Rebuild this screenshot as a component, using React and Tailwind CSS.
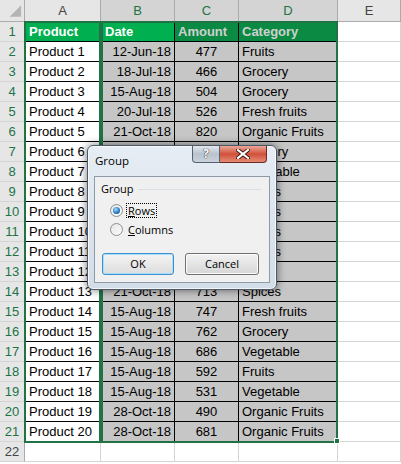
import React from 'react'

const data = [
  ['Product', 'Date', 'Amount', 'Category'],
  ['Product 1', '12-Jun-18', '477', 'Fruits'],
  ['Product 2', '18-Jul-18', '466', 'Grocery'],
  ['Product 3', '15-Aug-18', '504', 'Grocery'],
  ['Product 4', '20-Jul-18', '526', 'Fresh fruits'],
  ['Product 5', '21-Oct-18', '820', 'Organic Fruits'],
  ['Product 6', '21-Oct-18', '790', 'Grocery'],
  ['Product 7', '15-Aug-18', '612', 'Vegetable'],
  ['Product 8', '12-Jun-18', '540', 'Spices'],
  ['Product 9', '18-Jul-18', '475', 'Spices'],
  ['Product 10', '15-Aug-18', '699', 'Spices'],
  ['Product 11', '20-Jul-18', '583', 'Spices'],
  ['Product 12', '21-Oct-18', '606', 'Fruits'],
  ['Product 13', '21-Oct-18', '713', 'Spices'],
  ['Product 14', '15-Aug-18', '747', 'Fresh fruits'],
  ['Product 15', '15-Aug-18', '762', 'Grocery'],
  ['Product 16', '15-Aug-18', '686', 'Vegetable'],
  ['Product 17', '15-Aug-18', '592', 'Fruits'],
  ['Product 18', '15-Aug-18', '531', 'Vegetable'],
  ['Product 19', '28-Oct-18', '490', 'Organic Fruits'],
  ['Product 20', '28-Oct-18', '681', 'Organic Fruits'],
]

function cellClass(r, c) {
  const inData = r <= 21
  if (!inData || c === 4) return 'bg-white border-r border-b border-[#d4d4d4]'
  const base = 'border-r border-b border-black whitespace-nowrap overflow-hidden'
  if (r === 1) {
    if (c === 0) return base + ' bg-[#00b050] text-white font-bold pl-[4px]'
    if (c === 1) return base + ' bg-[#00b050] text-white font-bold pl-[4px]'
    return base + ' bg-[#0a8a42] text-[#d0d0d0] font-bold pl-[3px]'
  }
  if (c === 0) return base + ' bg-white pl-[4px]'
  if (c === 1) return base + ' bg-[#c6c6c6] justify-end pr-[3px]'
  if (c === 2) return base + ' bg-[#c6c6c6] justify-center'
  return base + ' bg-[#c6c6c6] pl-[3px]'
}

function Radio({ checked }) {
  return (
    <div className="w-[13px] h-[13px] rounded-full border border-[#8e8f8f] bg-gradient-to-br from-[#e6e6e6] to-[#fbfbfb] flex items-center justify-center">
      {checked && (
        <div className="w-[7px] h-[7px] rounded-full bg-[radial-gradient(circle_at_40%_35%,#a8dcff,#1f74c0_60%,#0d4a86)]" />
      )}
    </div>
  )
}

function GroupDialog() {
  return (
    <div className="absolute left-[87px] top-[145px] w-[190px] h-[145px] rounded-[6px] border border-[#4d5968] bg-gradient-to-b from-[#e6edf4] to-[#d3dde8] shadow-[0_0_9px_rgba(0,0,0,0.55),inset_0_0_0_1px_rgba(255,255,255,0.7)] flex flex-col font-['Open_Sans',sans-serif] text-[11px] text-black">
      {/* title bar */}
      <div className="h-[30px] flex justify-between items-start">
        <div className="pl-[7px] pt-[6px] text-[11.5px]">Group</div>
        <div className="flex mr-[9px]">
          <div className="w-[28px] h-[17px] rounded-bl-[4px] border border-t-0 border-[#56626f] bg-gradient-to-b from-[#e2e8ee] via-[#b9c3cd] to-[#cad3dc] flex items-center justify-center text-white font-bold text-[12px] leading-none [text-shadow:0_0_1px_#222,0_0_1px_#222]">
            ?
          </div>
          <div className="w-[47px] h-[17px] rounded-br-[4px] border border-t-0 border-l-0 border-[#6b2a22] bg-gradient-to-b from-[#eaa797] via-[#d04f3a] to-[#e38a73] flex items-center justify-center">
            <svg width="14" height="10" viewBox="0 0 14 10">
              <path d="M2 1 L12 9 M12 1 L2 9" stroke="#3a1410" strokeWidth="4" strokeLinecap="square" />
              <path d="M2 1 L12 9 M12 1 L2 9" stroke="#ffffff" strokeWidth="2.2" strokeLinecap="square" />
            </svg>
          </div>
        </div>
      </div>

      {/* client area */}
      <div className="ml-[6px] w-[176px] h-[107px] border border-[#8d9aa8] bg-[#f0f0f0] flex flex-col">
        <div className="mt-[5px] h-[15px] flex items-center pl-[6px] pr-[8px] gap-[4px]">
          <span>Group</span>
          <div className="flex-1 h-px bg-[#d5dfe5]" />
        </div>
        <div className="mt-[4px] pl-[15px] flex flex-col">
          <div className="h-[19px] flex items-center gap-[3px]">
            <Radio checked />
            <span className="border border-dotted border-black px-[1px] leading-[13px]">
              <span className="underline">R</span>ows
            </span>
          </div>
          <div className="h-[19px] flex items-center gap-[3px]">
            <Radio />
            <span className="border border-transparent px-[1px] leading-[13px]">
              <span className="underline">C</span>olumns
            </span>
          </div>
        </div>
        <div className="mt-[14px] pl-[7px] flex gap-[11px]">
          <div className="w-[72px] h-[22px] rounded-[3px] border border-[#3c8fd0] shadow-[inset_0_0_0_1px_#a9defa] bg-gradient-to-b from-[#f4f4f4] to-[#dddddd] flex items-center justify-center">
            OK
          </div>
          <div className="w-[74px] h-[22px] rounded-[3px] border border-[#707070] shadow-[inset_0_0_0_1px_#fcfcfc] bg-gradient-to-b from-[#f2f2f2] to-[#d6d6d6] flex items-center justify-center">
            Cancel
          </div>
        </div>
      </div>
    </div>
  )
}

export default function App() {
  const rows = Array.from({ length: 22 }, (_, i) => i + 1)
  const cols = ['A', 'B', 'C', 'D', 'E']

  return (
    <div className="relative w-[401px] h-[464px] overflow-hidden bg-white font-['Liberation_Sans',Arial,sans-serif] text-[13px] text-black">
      <div className="grid grid-cols-[25px_76px_74px_64px_99px_1fr]">
        {/* column headers */}
        <div className="h-[22px] bg-[#e6e6e6] border-r border-b border-[#ababab] flex items-end justify-end">
          <svg width="25" height="22" viewBox="0 0 25 22">
            <polygon points="22,6 22,18 10,18" fill="#b4b4b4" />
          </svg>
        </div>
        {cols.map((c, i) => (
          <div
            key={c}
            className={
              i >= 1 && i <= 3
                ? 'h-[22px] bg-[#d4d4d4] border-r border-b border-[#ababab] text-[#217346] flex items-center justify-center'
                : 'h-[22px] bg-[#e6e6e6] border-r border-b border-[#ababab] text-[#444] flex items-center justify-center'
            }
          >
            {c}
          </div>
        ))}

        {/* body rows */}
        {rows.map(r => (
          <React.Fragment key={r}>
            <div
              className={
                r <= 21
                  ? 'h-5 bg-[#e6e6e6] border-b border-[#d4d4d4] border-r border-r-[#ababab] text-[#217346] flex items-center justify-center'
                  : 'h-5 bg-[#e6e6e6] border-b border-[#d4d4d4] border-r border-r-[#ababab] text-[#444] flex items-center justify-center'
              }
            >
              {r}
            </div>
            {[0, 1, 2, 3, 4].map(c => (
              <div key={c} className={'h-5 flex items-center pt-px ' + cellClass(r, c)}>
                {r <= 21 && c < 4 ? data[r - 1][c] : ''}
              </div>
            ))}
          </React.Fragment>
        ))}
      </div>

      {/* selection outlines */}
      <div className="absolute left-[24px] top-[21px] w-[77px] h-[422px] border-2 border-[#217346] pointer-events-none" />
      <div className="absolute left-[101px] top-[21px] w-[237px] h-[422px] border-2 border-[#217346] pointer-events-none" />
      <div className="absolute left-[334px] top-[438px] w-[6px] h-[6px] bg-[#217346] border border-white" />

      <GroupDialog />
    </div>
  )
}
